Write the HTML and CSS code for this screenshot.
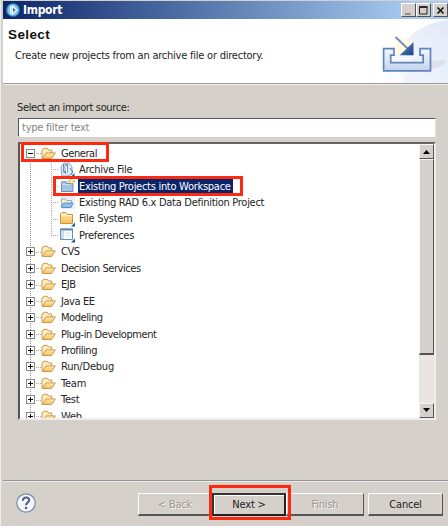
FILE: index.html
```html
<!DOCTYPE html>
<html lang="en">
<head>
<meta charset="utf-8">
<title>Import</title>
<link rel="stylesheet" href="styles.css">
</head>
<body>
<svg class="defs" width="0" height="0">
  <defs>
    <linearGradient id="fold" x1="0" y1="0" x2="0" y2="1"><stop offset="0" stop-color="#fff0bd"/><stop offset="1" stop-color="#f4bd56"/></linearGradient>
    <linearGradient id="blue" x1="0" y1="0" x2="1" y2="1"><stop offset="0" stop-color="#7794bd"/><stop offset="1" stop-color="#0d418c"/></linearGradient>
    <linearGradient id="tray" x1="0" y1="0" x2="0" y2="1"><stop offset="0" stop-color="#f4f8ff"/><stop offset="1" stop-color="#c3d4ee"/></linearGradient>
    <linearGradient id="wash" x1="1" y1="0" x2="0" y2="1"><stop offset="0" stop-color="#dfe8f8"/><stop offset="1" stop-color="#fff"/></linearGradient>
    <symbol id="folder" viewBox="0 0 15 13">
      <path d="M1 11V3.200Q2 1.400 3.200 1.300h3l1.300 1.700h3.200v3" fill="#ffedbd" stroke="#cc974c"/>
      <path d="M1.200 11.500 5.200 5.900h9.200l-3.900 5.600z" fill="url(#fold)" stroke="#cc974c" stroke-linejoin="round"/>
    </symbol>
  </defs>
</svg>
<main class="window">
  <header class="titlebar">
    <svg class="app" viewBox="0 0 14 14"><circle cx="7" cy="7" r="6.800" fill="#3d94cf"/><circle cx="7" cy="7" r="5.500" fill="#83c7ec"/><path d="M4.600 3.200v7.600M6.400 3l4.300 4-4.300 4z" fill="#2b78b4" stroke="#fff" stroke-width="1.200"/></svg>
    <h1>Import</h1>
    <div class="controls">
      <button><svg viewBox="0 0 13 11"><path d="M3 9h5.500" stroke="#777" stroke-width="1.500"/></svg></button>
      <button><svg viewBox="0 0 13 11"><path d="M2.500 2h7.500v7H2.500z" fill="none" stroke="#222"/><path d="M2 2h8.500" stroke="#222" stroke-width="1.800"/></svg></button>
      <button class="close"><svg viewBox="0 0 13 11"><path d="m3.500 2.500 6 6M9.500 2.500l-6 6" stroke="#111" stroke-width="1.600"/></svg></button>
    </div>
  </header>
  <section class="banner">
    <div>
      <h2>Select</h2>
      <p>Create new projects from an archive file or directory.</p>
    </div>
    <svg class="art" viewBox="0 0 78 64">
      <path d="M13 64C23 28 43 5 78 1v63z" fill="url(#wash)"/>
      <path d="M32 64C40 38 56 25 78 21v43z" fill="#e4ecfa" opacity=".45"/>
      <ellipse cx="58" cy="47" rx="18" ry="4" fill="#c9b9c4" opacity=".3" transform="rotate(-14 58 47)"/>
      <circle cx="33" cy="28" r="8" fill="#fffbe2"/>
      <path d="M13.600 29.600H24v6.500h-3.300v7.600h32.500v-7.600H50v-6.500h10.500v22.300H13.600z" fill="url(#tray)" stroke="#5f84b9" stroke-width="1.700"/>
      <path d="m25.500 18 12 11.500" stroke="#7590b8" stroke-width="2"/>
      <path d="M43.500 23v13.200H29.700z" fill="url(#blue)"/>
    </svg>
  </section>
  <section class="content">
    <label>Select an import source:</label>
    <div class="filter">type filter text</div>
    <div class="tree">
      <ul class="rows">
        <li class="root open"><i class="box"></i><svg class="folder"><use href="#folder"/></svg><span>General</span></li>
        <li class="leaf"><svg viewBox="0 0 18 16"><path d="M6 1h5l3 4v7l-4 2H4L3 5z" fill="#e2eefb" stroke="#88a5c9"/><path d="M5 2h5v8l-2 2-3-2z" fill="#6790c3"/><path d="M7 2v7M8.500 4v7" stroke="#fff"/><path d="m12 6 3 4-3 3" fill="none" stroke="#5b83b5"/><path d="M16.500 11v4h-4z" fill="#155b9e"/></svg><span>Archive File</span></li>
        <li class="leaf selected"><svg viewBox="0 0 18 16"><path d="M3.500 5.500V3.800h5v1.700h6.500v8h-11.500z" fill="#a3c3e7" stroke="#6c91c0"/><path d="M4 6.500h10" stroke="#c8dcf3"/><path d="M13.500 0v7M10 3.500h7" stroke="#d8a62c" stroke-width="1.500"/><path d="M13.500 2v3M12 3.500h3" stroke="#fff8b3"/></svg><span>Existing Projects into Workspace</span></li>
        <li class="leaf"><svg viewBox="0 0 18 16"><path d="M4 1h13v13H4z" fill="#e8effb"/><path d="M3.500 12V4h4l1 1.500h5V8" fill="#fff3bd" stroke="#8badd6"/><path d="M3.500 12.500 5.500 8h9.500l-2 4.500z" fill="#8fc2f0" stroke="#5a92cc"/></svg><span>Existing RAD 6.x Data Definition Project</span></li>
        <li class="leaf"><svg viewBox="0 0 18 16"><path d="M2.500 12.500V3L4 1.500h4L9.500 3.500h5v9z" fill="url(#fold)" stroke="#cf963e"/><path d="M3 4.500h11" stroke="#fff3c7"/><path d="M17 11.500v4h-4z" fill="#155b9e"/></svg><span>File System</span></li>
        <li class="leaf prefs"><svg viewBox="0 0 18 16"><path d="M2.500 2h12v10.500h-12z" fill="#f5faff" stroke="#728fac"/><path d="M2 2.500h13" stroke="#6787ad" stroke-width="2"/><path d="M3 4h3v8H3z" fill="#cbdcf0"/><path d="M8 6h5M8 8.500h5" stroke="#dce9f6"/><path d="M17 11.500v4h-4z" fill="#155b9e"/></svg><span>Preferences</span></li>
        <li class="root"><i class="box"></i><svg class="folder"><use href="#folder"/></svg><span>CVS</span></li>
        <li class="root"><i class="box"></i><svg class="folder"><use href="#folder"/></svg><span>Decision Services</span></li>
        <li class="root"><i class="box"></i><svg class="folder"><use href="#folder"/></svg><span>EJB</span></li>
        <li class="root"><i class="box"></i><svg class="folder"><use href="#folder"/></svg><span>Java EE</span></li>
        <li class="root"><i class="box"></i><svg class="folder"><use href="#folder"/></svg><span>Modeling</span></li>
        <li class="root"><i class="box"></i><svg class="folder"><use href="#folder"/></svg><span>Plug-in Development</span></li>
        <li class="root"><i class="box"></i><svg class="folder"><use href="#folder"/></svg><span>Profiling</span></li>
        <li class="root wide"><i class="box"></i><svg class="folder"><use href="#folder"/></svg><span>Run/Debug</span></li>
        <li class="root wide"><i class="box"></i><svg class="folder"><use href="#folder"/></svg><span>Team</span></li>
        <li class="root wide"><i class="box"></i><svg class="folder"><use href="#folder"/></svg><span>Test</span></li>
        <li class="root wide"><i class="box"></i><svg class="folder"><use href="#folder"/></svg><span>Web</span></li>
      </ul>
      <div class="scroll">
        <div class="arrow"><svg viewBox="0 0 9 5"><path d="M1 5 4.500 1 8 5z"/></svg></div>
        <div class="thumb"></div>
        <div class="track"></div>
        <div class="arrow"><svg viewBox="0 0 9 5"><path d="M1 0h7L4.500 4z"/></svg></div>
      </div>
      <div class="mark mark-general"></div>
      <div class="mark mark-existing"></div>
    </div>
  </section>
  <footer>
    <svg class="help" viewBox="0 0 20 20"><circle cx="10" cy="10" r="9.200" fill="#f4f6fa" stroke="#7d8ca8" stroke-width="1.200"/><path d="M6.900 7.700c0-4.200 6.300-4.200 6.300-.5 0 2.300-3.200 2.200-3.200 5" fill="none" stroke="#4c648e" stroke-width="2.100"/><circle cx="10" cy="15" r="1.300" fill="#4c648e"/></svg>
    <div class="buttons">
      <button class="off">&lt; Back</button>
      <button class="default">Next &gt;<b class="mark mark-next"></b></button>
      <button class="off finish">Finish</button>
      <button class="cancel">Cancel</button>
    </div>
  </footer>
</main>
</body>
</html>
```
FILE: styles.css
```css
* { box-sizing: border-box; }
body { margin: 0; background: #fff; overflow: hidden; }
body, button { font-family: "DejaVu Sans Condensed", "DejaVu Sans", sans-serif; font-stretch: condensed; font-size: 11px; letter-spacing: -.23px; color: #242424; }
.defs { position: absolute; }
h1, h2, p, ul { margin: 0; padding: 0; font-weight: normal; }
.window { width: 448px; height: 526px; background: #d5d0c9; border-left: 1px solid #eee; border-top: 1px solid #d5d0c9; padding-left: 2px; display: flex; flex-direction: column; }
.titlebar { height: 18px; flex: none; display: flex; align-items: center; padding-left: 3px; background: linear-gradient(90deg, #0b2669, #a7cbf1 92%); }
.app { width: 14px; height: 14px; margin-right: 3px; }
h1 { font-size: 12px; font-weight: bold; color: #fff; letter-spacing: -.3px; }
.controls { display: flex; margin-left: auto; align-self: flex-start; margin-top: 2px; }
.controls button { width: 15px; height: 14px; padding: 0; background: #d5d0c9; border: 1px solid; border-color: #fff #555 #555 #fff; }
.controls svg { display: block; width: 13px; height: 11px; }
.controls .close { margin-left: 2px; }
.banner { height: 65px; flex: none; background: #fff; border-bottom: 1px solid #999; display: flex; justify-content: space-between; }
.banner > div { padding: 7px 0 0 5px; }
h2 { font: bold 13.500px/17px "Liberation Sans", sans-serif; letter-spacing: .4px; color: #111; }
.banner p { margin: 6px 0 0 7px; line-height: 14px; white-space: nowrap; }
.art { width: 78px; height: 64px; }
.content { padding: 15px 12px 0 15px; border-top: 1px solid #eee; height: 396px; }
label { display: block; height: 15px; line-height: 15px; margin: 0 0 3px -1px; letter-spacing: -.36px; }
.filter { height: 19px; width: 418px; border: 1px solid; border-color: #555 #e8e5df #fff #555; background: #fff; color: #858585; line-height: 17px; padding-left: 3px; margin-bottom: 5px; }
.tree { position: relative; height: 278px; width: 418px; border: 2px solid; border-color: #666 #eee #eee #555; background: #fff; display: flex; }
.rows { flex: 1; overflow: hidden; list-style: none; padding-top: 1px; background: repeating-linear-gradient(#999 0 1px, transparent 1px 2px) 10px 9px / 1px 100% no-repeat; }
.rows li { height: 16.450px; display: flex; align-items: center; white-space: nowrap; }
.root { padding-left: 6px; letter-spacing: -.43px; background: repeating-linear-gradient(90deg, #aaa 0 1px, transparent 1px 2px) 16px 8px / 5px 1px no-repeat; }
.wide { letter-spacing: -.2px; }
.box { width: 9px; height: 9px; border: 1px solid #888; margin-right: 6px; flex: none; background: linear-gradient(#111, #111) center / 5px 1px no-repeat, linear-gradient(#111, #111) center / 1px 5px no-repeat, #fff; }
.open .box { background: linear-gradient(#111, #111) center / 5px 1px no-repeat, #fff; }
.folder { width: 15px; height: 13px; margin-right: 4px; flex: none; }
.rows span { line-height: 15px; padding: 0 1px; }
.leaf { padding-left: 31px; letter-spacing: -.28px; background: repeating-linear-gradient(90deg, #aaa 0 1px, transparent 1px 2px) 31px 8px / 8px 1px no-repeat, repeating-linear-gradient(#aaa 0 1px, transparent 1px 2px) 31px 0 / 1px 100% no-repeat; }
.prefs { background-size: 8px 1px, 1px 9px; }
.leaf svg { width: 18px; height: 16px; margin: 0 2px 0 7px; flex: none; }
.selected span { background: #0b246a; color: #fff; padding-right: 2px; }
.scroll { width: 15px; flex: none; display: flex; flex-direction: column; background: #e9e6e1; }
.arrow, .thumb { background: #d5d0c9; border: 1px solid; border-color: #f7f6f3 #555 #555 #f7f6f3; }
.arrow { height: 15px; display: grid; place-items: center; flex: none; }
.arrow svg { width: 9px; height: 5px; }
.thumb { height: 196px; border-bottom-width: 2px; flex: none; }
.track { flex: 1; }
.mark { position: absolute; border: 3px solid #fb2a10; pointer-events: none; }
.mark-general { left: 1px; top: -2px; width: 88px; height: 20px; }
.mark-existing { left: 33px; top: 32px; width: 190px; height: 20px; }
footer { flex: 1; border-top: 1px solid #929292; box-shadow: inset 0 1px #eee; display: flex; padding: 12px 5px 0 13px; }
.help { width: 20px; height: 20px; }
.buttons { display: flex; margin-left: auto; }
.buttons button { position: relative; height: 23px; width: 74px; padding: 0; background: #d5d0c9; border: 1px solid; border-color: #fff #555 #555 #fff; border-bottom-width: 2px; letter-spacing: -.2px; }
.buttons .off { color: #9a9894; text-shadow: 1px 1px #f5f3ef; }
.buttons .default { z-index: 1; border: 2px solid; border-color: #333 #222 #222 #333; box-shadow: inset 1px 1px #fff; }
.buttons .finish { width: 78px; }
.buttons .cancel { width: 75px; margin-left: 4px; }
.buttons .mark-next { left: -5px; top: -10px; width: 82px; height: 35px; }
```
